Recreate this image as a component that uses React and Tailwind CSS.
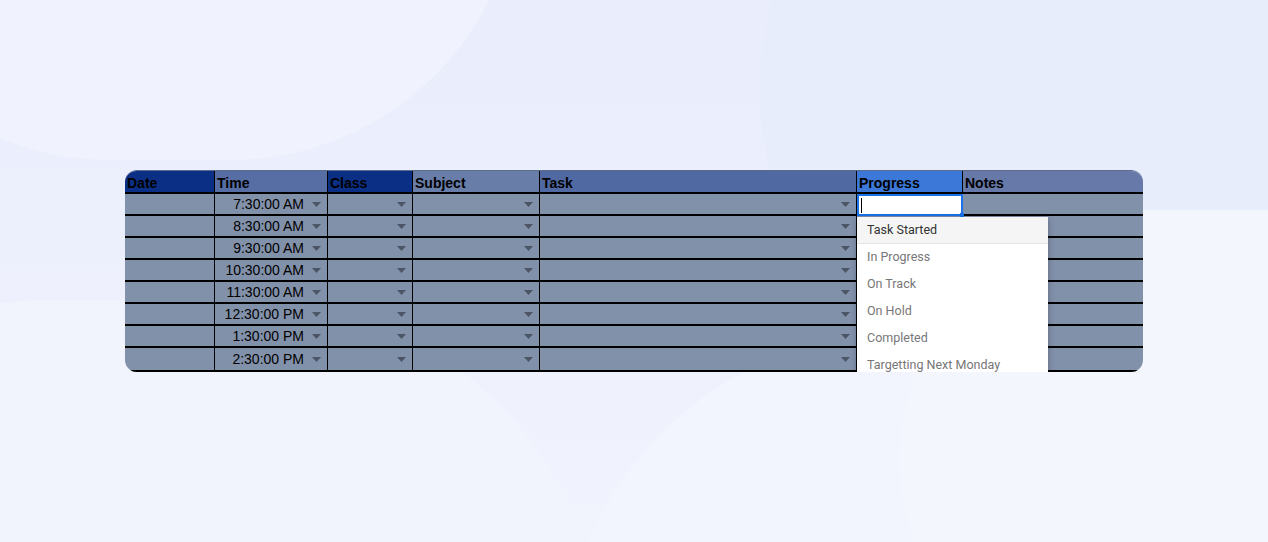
import React from 'react'

const columns = [
  { name: 'Date', head: 'bg-[#0b2f84]' },
  { name: 'Time', head: 'bg-[#566ea4]' },
  { name: 'Class', head: 'bg-[#0b2f84]' },
  { name: 'Subject', head: 'bg-[#697da9]' },
  { name: 'Task', head: 'bg-[#5069a3]' },
  { name: 'Progress', head: 'bg-[#3c78d8]' },
  { name: 'Notes', head: 'bg-[#6679a8]' },
]

const times = [
  '7:30:00 AM',
  '8:30:00 AM',
  '9:30:00 AM',
  '10:30:00 AM',
  '11:30:00 AM',
  '12:30:00 PM',
  '1:30:00 PM',
  '2:30:00 PM',
]

const options = ['Task Started', 'In Progress', 'On Track', 'On Hold', 'Completed', 'Targetting Next Monday']

function Arrow() {
  return (
    <svg width="9" height="5" viewBox="0 0 9 5" className="shrink-0">
      <path d="M0 0h9L4.5 5z" fill="#4b5565" />
    </svg>
  )
}

function DropCell({ children }) {
  return (
    <div className="flex items-center justify-end bg-[#8291aa] border-r border-b-2 border-black pr-[6px]">
      {children && <span className="mr-[8px]">{children}</span>}
      <Arrow />
    </div>
  )
}

function PlainCell({ right = true }) {
  return <div className={`bg-[#8291aa] border-b-2 border-black ${right ? 'border-r' : ''}`} />
}

function ProgressCell({ index }) {
  if (index === 0) {
    return (
      <div className="relative bg-white border-2 border-[#1a73e8] flex items-center pl-[2px]">
        <div className="w-px h-[15px] bg-black" />
        <div className="absolute -right-[3px] -bottom-[3px] w-[4px] h-[4px] bg-[#1a73e8]" />
      </div>
    )
  }
  return <PlainCell />
}

function Dropdown() {
  return (
    <div className="absolute left-[732px] top-[46px] w-[191px] bg-white shadow-[0_2px_6px_rgba(0,0,0,0.3)] font-['Roboto',sans-serif] text-[12.5px]">
      {options.map((o, i) => (
        <div
          key={o}
          className={`h-[27px] flex items-center pl-[10px] ${i === 0 ? 'bg-[#f5f5f5] text-[#333] border-b border-[#e4e4e4]' : 'text-[#777]'}`}
        >
          {o}
        </div>
      ))}
    </div>
  )
}

export default function App() {
  return (
    <div className="relative w-[1268px] h-[542px] overflow-hidden bg-gradient-to-b from-[#e9edfc] to-[#f1f3fd]">
      <div className="absolute -left-[180px] -top-[420px] w-[700px] h-[580px] rounded-full bg-[#f0f2fd]" />
      <div className="absolute left-[760px] -top-[260px] w-[900px] h-[700px] rounded-full bg-[#e8edfc]" />
      <div className="absolute -left-[300px] top-[300px] w-[900px] h-[700px] rounded-full bg-[#f2f4fd]" />
      <div className="absolute left-[560px] top-[330px] w-[1000px] h-[700px] rounded-full bg-[#f3f5fe]" />
      <div className="absolute left-[900px] top-[210px] w-[800px] h-[500px] rounded-full bg-[#f4f6fd]" />

      <div className="relative pt-[170px] pl-[125px]">
        <div className="relative w-[1018px] rounded-[12px] overflow-hidden font-['Liberation_Sans',Arial,sans-serif] text-[14px] text-black border-t border-[#5d6c8c]">
          <div className="grid grid-cols-[90px_113px_85px_127px_317px_106px_180px] grid-rows-[23px_repeat(7,22px)_24px]">
            {columns.map((c, i) => (
              <div
                key={c.name}
                className={`${c.head} border-b-2 border-black ${i < columns.length - 1 ? 'border-r' : ''} font-bold flex items-center pl-[2px] pt-[3px] leading-none`}
              >
                {c.name}
              </div>
            ))}
            {times.map((t, r) => (
              <React.Fragment key={t}>
                <PlainCell />
                <DropCell>{t}</DropCell>
                <DropCell />
                <DropCell />
                <DropCell />
                <ProgressCell index={r} />
                <PlainCell right={false} />
              </React.Fragment>
            ))}
          </div>
          <Dropdown />
        </div>
      </div>
    </div>
  )
}
